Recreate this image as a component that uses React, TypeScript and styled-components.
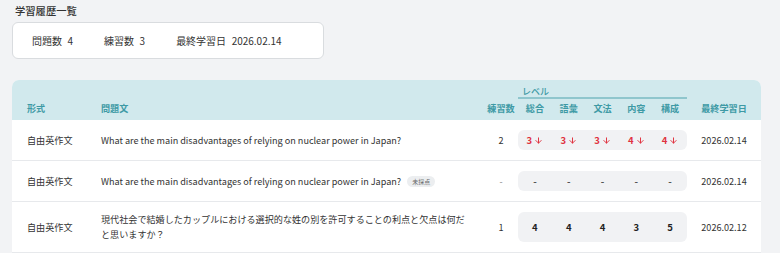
import styled, { createGlobalStyle } from "styled-components";
import { ArrowDown } from "lucide-react";

const GlobalStyle = createGlobalStyle`
  html, body {
    margin: 0;
    padding: 0;
    background: #f2f3f5;
  }
  body {
    font-family: "Noto Sans CJK JP", "Noto Sans", sans-serif;
    color: #333;
  }
`;

const Page = styled.div`
  width: 749px;
  padding: 3px 0 0 12px;
  display: flex;
  flex-direction: column;
`;

const Title = styled.h1`
  margin: 0 0 4px 3px;
  font-size: 10.3px;
  line-height: 15px;
  font-weight: 500;
  color: #333;
`;

const Summary = styled.div`
  width: 312px;
  height: 37px;
  box-sizing: border-box;
  display: flex;
  align-items: center;
  gap: 31px;
  padding: 0 19px;
  background: #fff;
  border: 1px solid #d9dcdf;
  border-radius: 6px;
  font-size: 10px;
`;

const Stat = styled.span`
  display: flex;
  gap: 5.5px;
`;

const Card = styled.div`
  margin-top: 21px;
  background: #fff;
  border-radius: 7px 7px 0 0;
  overflow: hidden;
`;

const Row = styled.div<{ $head?: boolean }>`
  display: grid;
  grid-template-columns: 89px 383px 34px 169px 74px;
  align-items: center;
  font-size: 9.1px;
  background: ${(p) => (p.$head ? "#d1e9ed" : "#fff")};
  border-bottom: ${(p) => (p.$head ? "none" : "1px solid #e7e9ec")};
  color: ${(p) => (p.$head ? "#3e9aa5" : "#333")};
  font-weight: ${(p) => (p.$head ? 700 : 400)};
  height: ${(p) => (p.$head ? "40px" : "auto")};
  min-height: 40px;
  box-sizing: border-box;
`;

const Cell = styled.div<{ $align?: "left" | "center" }>`
  text-align: ${(p) => p.$align ?? "left"};
  line-height: 15px;
`;

const FirstCell = styled(Cell)`
  padding-left: 15px;
`;

const TextCell = styled(Cell)`
  padding: 10px 16px 10px 0;
`;

const HeadBottom = styled.div`
  align-self: end;
  padding-bottom: 4px;
`;

const LevelHead = styled.div`
  align-self: end;
  display: flex;
  flex-direction: column;
  padding-bottom: 4px;
`;

const LevelLabel = styled.div`
  font-weight: 500;
  font-size: 9px;
  line-height: 11px;
  padding-left: 4px;
  border-bottom: 2px solid #8fc6cd;
  margin-bottom: 2px;
`;

const LevelCols = styled.div`
  display: grid;
  grid-template-columns: repeat(5, 1fr);
  text-align: center;
  line-height: 15px;
`;

const Pill = styled.div`
  align-self: stretch;
  margin: 10px 0;
  display: grid;
  grid-template-columns: repeat(5, 1fr);
  align-items: center;
  background: #f1f2f4;
  border-radius: 6px;
  min-height: 20px;
`;

const Score = styled.span<{ $tone: "down" | "none" | "plain" }>`
  display: flex;
  justify-content: center;
  align-items: center;
  gap: 2px;
  font-size: 9.5px;
  font-weight: 700;
  color: ${(p) =>
    p.$tone === "down" ? "#e0323f" : p.$tone === "none" ? "#555" : "#222"};
`;

const Badge = styled.span`
  display: inline-block;
  margin-left: 6px;
  padding: 0 5px;
  font-size: 6px;
  line-height: 11px;
  border-radius: 6px;
  background: #eceef0;
  color: #666;
  vertical-align: 1px;
`;

const Muted = styled.span`
  color: #888;
`;

type Entry = {
  kind: string;
  text: string;
  pending?: boolean;
  count: string;
  scores: string[];
  down?: boolean;
  date: string;
};

const entries: Entry[] = [
  {
    kind: "自由英作文",
    text: "What are the main disadvantages of relying on nuclear power in Japan?",
    count: "2",
    scores: ["3", "3", "3", "4", "4"],
    down: true,
    date: "2026.02.14",
  },
  {
    kind: "自由英作文",
    text: "What are the main disadvantages of relying on nuclear power in Japan?",
    pending: true,
    count: "-",
    scores: ["-", "-", "-", "-", "-"],
    date: "2026.02.14",
  },
  {
    kind: "自由英作文",
    text: "現代社会で結婚したカップルにおける選択的な姓の別を許可することの利点と欠点は何だと思いますか？",
    count: "1",
    scores: ["4", "4", "4", "3", "5"],
    date: "2026.02.12",
  },
];

const levels = ["総合", "語彙", "文法", "内容", "構成"];

export default function App() {
  return (
    <>
      <GlobalStyle />
      <Page>
        <Title>学習履歴一覧</Title>
        <Summary>
          <Stat>
            <span>問題数</span>
            <span>4</span>
          </Stat>
          <Stat>
            <span>練習数</span>
            <span>3</span>
          </Stat>
          <Stat>
            <span>最終学習日</span>
            <span>2026.02.14</span>
          </Stat>
        </Summary>
        <Card>
          <Row $head>
            <HeadBottom>
              <FirstCell>形式</FirstCell>
            </HeadBottom>
            <HeadBottom>
              <Cell>問題文</Cell>
            </HeadBottom>
            <HeadBottom>
              <Cell $align="center">練習数</Cell>
            </HeadBottom>
            <LevelHead>
              <LevelLabel>レベル</LevelLabel>
              <LevelCols>
                {levels.map((l) => (
                  <span key={l}>{l}</span>
                ))}
              </LevelCols>
            </LevelHead>
            <HeadBottom>
              <Cell $align="center">最終学習日</Cell>
            </HeadBottom>
          </Row>
          {entries.map((e, i) => (
            <Row key={i}>
              <FirstCell>{e.kind}</FirstCell>
              <TextCell>
                {e.text}
                {e.pending && <Badge>未採点</Badge>}
              </TextCell>
              <Cell $align="center">
                {e.count === "-" ? <Muted>-</Muted> : e.count}
              </Cell>
              <Pill>
                {e.scores.map((s, j) => (
                  <Score
                    key={j}
                    $tone={s === "-" ? "none" : e.down ? "down" : "plain"}
                  >
                    {s}
                    {e.down && <ArrowDown size={9} strokeWidth={2.6} />}
                  </Score>
                ))}
              </Pill>
              <Cell $align="center">{e.date}</Cell>
            </Row>
          ))}
        </Card>
      </Page>
    </>
  );
}
